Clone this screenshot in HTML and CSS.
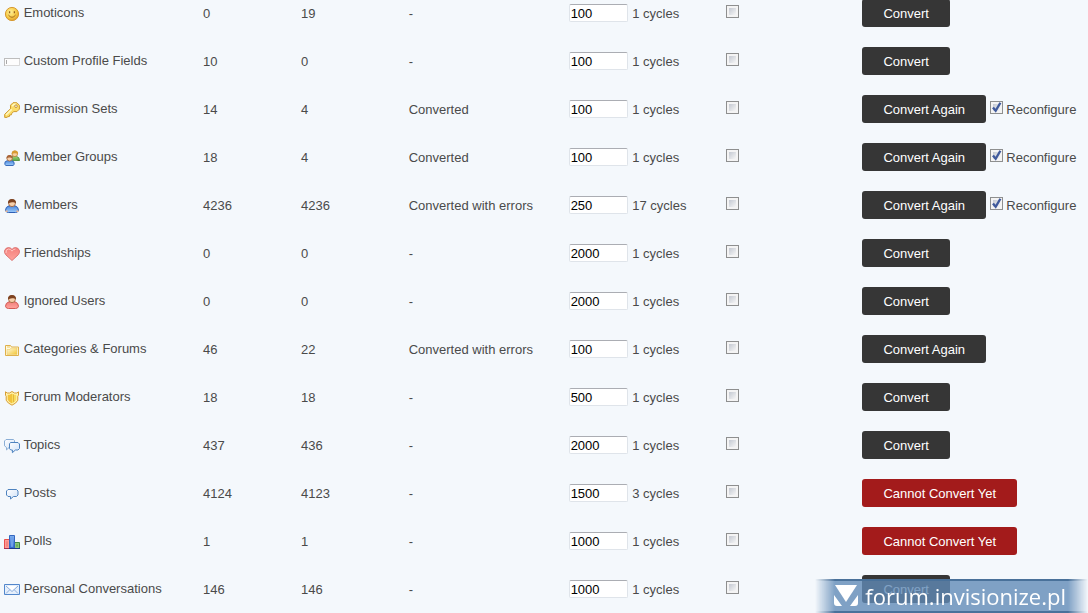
FILE: index.html
```html
<!DOCTYPE html>
<html lang="en">
<head>
<meta charset="utf-8">
<title>Converter</title>
<link rel="stylesheet" href="styles.css">
</head>
<body>
<svg class="defs" aria-hidden="true">
  <defs>
    <radialGradient id="gold" cx=".4" cy=".35" r=".7"><stop offset="0" stop-color="#fff19a"/><stop offset=".6" stop-color="#f6ca45"/><stop offset="1" stop-color="#dc9a2a"/></radialGradient>
    <linearGradient id="yellow" x2="1" y2="1"><stop offset="0" stop-color="#fffbe0"/><stop offset="1" stop-color="#f2c535"/></linearGradient>
    <linearGradient id="blue" x2="0" y2="1"><stop offset="0" stop-color="#4a86dc"/><stop offset="1" stop-color="#9ccbfb"/></linearGradient>
    <linearGradient id="red" x2="0" y2="1"><stop offset="0" stop-color="#f3807c"/><stop offset="1" stop-color="#ffa39c"/></linearGradient>
    <linearGradient id="green" x2="0" y2="1"><stop offset="0" stop-color="#9ed07a"/><stop offset="1" stop-color="#5cab45"/></linearGradient>
    <linearGradient id="pale" x2="1" y2="1"><stop offset="0" stop-color="#ffffff"/><stop offset="1" stop-color="#cfe1f7"/></linearGradient>
    <linearGradient id="barblue" x2="0" y2="1"><stop offset="0" stop-color="#7fb0f0"/><stop offset="1" stop-color="#2f68cf"/></linearGradient>
  </defs>
</svg>
<main class="page">
<table class="steps">
  <colgroup><col class="c-name"><col class="c-source"><col class="c-done"><col class="c-status"><col class="c-cycle"><col class="c-empty"><col class="c-action"></colgroup>
  <tbody>
  <tr>
    <th scope="row"><svg class="icon" viewBox="0 0 16 16"><circle cx="8" cy="8" r="6.6" fill="url(#gold)" stroke="#d79a32"/><path d="M5.6 5.2v2M10.4 5.2v2" stroke="#97601c" stroke-width="1.3"/><path d="M4.4 9q3.6 4.6 7.2 0" fill="none" stroke="#a66c1e"/></svg> <span class="name">Emoticons</span></th>
    <td class="text">0</td><td class="text">19</td><td class="text">-</td>
    <td><input class="amount" type="text" value="100" aria-label="Emoticons per cycle"> 1 cycles</td>
    <td><input class="tick" type="checkbox" aria-label="Empty emoticons"></td>
    <td><button class="btn" type="button">Convert</button></td>
  </tr>
  <tr>
    <th scope="row"><svg class="icon" viewBox="0 0 16 16"><path d="M.5 4.5h15v7H.5z" fill="#fdfdfd" stroke="#d9d9d9"/><path d="M0 4.5h16M.5 4v8" stroke="#bdbdbd"/><path d="M2.5 6v4" stroke="#aaa"/></svg> <span class="name">Custom Profile Fields</span></th>
    <td class="text">10</td><td class="text">0</td><td class="text">-</td>
    <td><input class="amount" type="text" value="100" aria-label="Custom profile fields per cycle"> 1 cycles</td>
    <td><input class="tick" type="checkbox" aria-label="Empty custom profile fields"></td>
    <td><button class="btn" type="button">Convert</button></td>
  </tr>
  <tr>
    <th scope="row"><svg class="icon" viewBox="0 0 16 16"><path d="M6.500 3.200 9 .7h3.800l2.600 2.600v3.800l-2.500 2.500H9.800L7.600 11.500l-.2 1.300-1.800.2-.2 1.500-1.600.2L3 15.400H.7v-3.100L6.500 6.800z" fill="#fbdc68" stroke="#ce9a2f"/><path d="M8.200 4.300 10 2.300h2.200M7.700 7.400 2 13" fill="none" stroke="#fff7bd" stroke-width="1.500"/><circle cx="12" cy="4.200" r="1.300" fill="#f4f8fc" stroke="#b98224" stroke-width=".8"/></svg> <span class="name">Permission Sets</span></th>
    <td class="text">14</td><td class="text">4</td><td class="text">Converted</td>
    <td><input class="amount" type="text" value="100" aria-label="Permission sets per cycle"> 1 cycles</td>
    <td><input class="tick" type="checkbox" aria-label="Empty permission sets"></td>
    <td><button class="btn" type="button">Convert Again</button> <label><input class="tick" type="checkbox" checked> Reconfigure</label></td>
  </tr>
  <tr>
    <th scope="row"><svg class="icon" viewBox="0 0 16 16"><path d="M6.500 10.500V8.300Q7 6.600 9.500 6.400h3Q15.500 7 15.500 10.500z" fill="url(#green)" stroke="#5b9a48"/><circle cx="10.800" cy="3.800" r="2.800" fill="#f7cfa0" stroke="#bd8330" stroke-width=".8"/><path d="M7.800 4Q7.600.3 11 .4T13.900 4q-3-1.600-6.100 0z" fill="#d79b31"/><path d="M.8 14.500Q.2 11 3.500 10.600h4.200q3 .6 2.500 3.900l-1.200 1H2z" fill="url(#blue)" stroke="#3b6dba"/><circle cx="5.600" cy="8.300" r="2.700" fill="#f6cfab" stroke="#a66a3c" stroke-width=".8"/><path d="M2.500 8.500Q2.300 4.800 5.600 4.900T8.700 8.500Q5.500 6.300 2.500 8.500z" fill="#a8653a"/></svg> <span class="name">Member Groups</span></th>
    <td class="text">18</td><td class="text">4</td><td class="text">Converted</td>
    <td><input class="amount" type="text" value="100" aria-label="Member groups per cycle"> 1 cycles</td>
    <td><input class="tick" type="checkbox" aria-label="Empty member groups"></td>
    <td><button class="btn" type="button">Convert Again</button> <label><input class="tick" type="checkbox" checked> Reconfigure</label></td>
  </tr>
  <tr>
    <th scope="row"><svg class="icon" viewBox="0 0 16 16"><path d="M1.500 12.300q0-3.500 3.500-4.500h6q3.500 1 3.500 4.500l-1 1.700-2 .5h-7l-2-.5z" fill="url(#blue)" stroke="#2d5fb5"/><path d="M1.600 13.300h2M12.400 13.300h2" stroke="#eeb48c" stroke-width="1.600"/><circle cx="8" cy="5.200" r="3.400" fill="#f6cfaa" stroke="#9a5b34" stroke-width=".8"/><path d="M4 5.600Q3.600.9 8 1t4 4.600Q10.600 3.800 8 4.300T4 5.600z" fill="#7d4220"/></svg> <span class="name">Members</span></th>
    <td class="text">4236</td><td class="text">4236</td><td class="text">Converted with errors</td>
    <td><input class="amount" type="text" value="250" aria-label="Members per cycle"> 17 cycles</td>
    <td><input class="tick" type="checkbox" aria-label="Empty members"></td>
    <td><button class="btn" type="button">Convert Again</button> <label><input class="tick" type="checkbox" checked> Reconfigure</label></td>
  </tr>
  <tr>
    <th scope="row"><svg class="icon" viewBox="0 0 16 16"><path d="M8 14.500 1.800 8.800Q.2 7 .6 4.600 1.500 1.700 4.600 1.600 6.800 1.700 8 3.500q1.200-1.800 3.400-1.900 3.100.1 4 3 .4 2.400-1.200 4.200z" fill="url(#red)" stroke="#dc7573"/><path d="M2 7Q1.500 3.200 4.600 3 7 3.200 8 5.200 9 3.200 11.400 3" fill="none" stroke="#ffc6c2"/></svg> <span class="name">Friendships</span></th>
    <td class="text">0</td><td class="text">0</td><td class="text">-</td>
    <td><input class="amount" type="text" value="2000" aria-label="Friendships per cycle"> 1 cycles</td>
    <td><input class="tick" type="checkbox" aria-label="Empty friendships"></td>
    <td><button class="btn" type="button">Convert</button></td>
  </tr>
  <tr>
    <th scope="row"><svg class="icon" viewBox="0 0 16 16"><path d="M1.500 12.300q0-3.500 3.500-4.500h6q3.500 1 3.500 4.500l-1 1.700-2 .5h-7l-2-.5z" fill="url(#red)" stroke="#d25b55"/><circle cx="8" cy="5.200" r="3.400" fill="#f6cfaa" stroke="#9a5b34" stroke-width=".8"/><path d="M4 5.600Q3.600.9 8 1t4 4.600Q10.600 3.800 8 4.300T4 5.600z" fill="#7d4220"/></svg> <span class="name">Ignored Users</span></th>
    <td class="text">0</td><td class="text">0</td><td class="text">-</td>
    <td><input class="amount" type="text" value="2000" aria-label="Ignored users per cycle"> 1 cycles</td>
    <td><input class="tick" type="checkbox" aria-label="Empty ignored users"></td>
    <td><button class="btn" type="button">Convert</button></td>
  </tr>
  <tr>
    <th scope="row"><svg class="icon" viewBox="0 0 16 16"><path d="M1.500 13.500v-10h5l1 1.500h7v8.500z" fill="#fffadf" stroke="#deb04b"/><path d="M3 12.500v-5h3l1-1.500h6v6.500z" fill="url(#yellow)" stroke="#edcb69" stroke-width=".6"/><path d="M3 5h3" stroke="#ebc76a"/></svg> <span class="name">Categories &amp; Forums</span></th>
    <td class="text">46</td><td class="text">22</td><td class="text">Converted with errors</td>
    <td><input class="amount" type="text" value="100" aria-label="Categories and forums per cycle"> 1 cycles</td>
    <td><input class="tick" type="checkbox" aria-label="Empty categories and forums"></td>
    <td><button class="btn" type="button">Convert Again</button></td>
  </tr>
  <tr>
    <th scope="row"><svg class="icon" viewBox="0 0 16 16"><path d="M8 1.500 5.500 3H3.200L1.500 1.800v3.400l.7 1v4Q3.500 13.200 8 15.200q4.500-2 5.800-5v-4l.7-1V1.800L12.800 3h-2.300z" fill="#fff3b3" stroke="#d79d32"/><path d="M8 3.500 5.500 4.800H3.700v5Q5 12.200 8 13.600z" fill="#f2c23c"/><path d="M8 3.500 10.500 4.800h1.800v5Q11 12.200 8 13.600z" fill="#f8dc5c"/><path d="M9.500 4.500v7.600" stroke="#e5b53e"/></svg> <span class="name">Forum Moderators</span></th>
    <td class="text">18</td><td class="text">18</td><td class="text">-</td>
    <td><input class="amount" type="text" value="500" aria-label="Forum moderators per cycle"> 1 cycles</td>
    <td><input class="tick" type="checkbox" aria-label="Empty forum moderators"></td>
    <td><button class="btn" type="button">Convert</button></td>
  </tr>
  <tr>
    <th scope="row"><svg class="icon" viewBox="0 0 16 16"><path d="M2 1.500h7.500l1 1v6l-1 1H5l-2.500 2.400V9.500L.5 7.800V3z" fill="url(#pale)" stroke="#8aaed6"/><path d="M6.500 4.500H14l1.500 1.500v4.500L14 12h-2.600l-3 2.700V12H6.800L5.500 10.700V5.800z" fill="url(#pale)" stroke="#4e83bf"/></svg> <span class="name">Topics</span></th>
    <td class="text">437</td><td class="text">436</td><td class="text">-</td>
    <td><input class="amount" type="text" value="2000" aria-label="Topics per cycle"> 1 cycles</td>
    <td><input class="tick" type="checkbox" aria-label="Empty topics"></td>
    <td><button class="btn" type="button">Convert</button></td>
  </tr>
  <tr>
    <th scope="row"><svg class="icon" viewBox="0 0 16 16"><path d="M4 3.500h8.500L14 5v4l-1.500 1.500h-3L6.500 13v-2.500H4L2.500 9V5z" fill="url(#pale)" stroke="#4e83bf"/></svg> <span class="name">Posts</span></th>
    <td class="text">4124</td><td class="text">4123</td><td class="text">-</td>
    <td><input class="amount" type="text" value="1500" aria-label="Posts per cycle"> 3 cycles</td>
    <td><input class="tick" type="checkbox" aria-label="Empty posts"></td>
    <td><button class="btn btn-blocked" type="button">Cannot Convert Yet</button></td>
  </tr>
  <tr>
    <th scope="row"><svg class="icon" viewBox="0 0 16 16"><path d="M.5 5.500h5v9h-5z" fill="#ff9b96" stroke="#e8504d"/><path d="M2.500 7.500h1v5h-1z" fill="#ffc5bf" stroke="#f58580"/><path d="M10.500 8.500h5v6h-5z" fill="#8cc67a" stroke="#3f8a45"/><path d="M12.500 10.500h1v2h-1z" fill="#b9e3a5" stroke="#69ad5c"/><path d="M5.500 1.500h5v13h-5z" fill="url(#barblue)" stroke="#3467c0"/><path d="M7.500 3.500h1v9h-1z" fill="#76a8ee" stroke="#6fa0e8"/><path d="M0 14.500h5" stroke="#a52e54"/><path d="M5 14.500h11" stroke="#1d3b86"/></svg> <span class="name">Polls</span></th>
    <td class="text">1</td><td class="text">1</td><td class="text">-</td>
    <td><input class="amount" type="text" value="1000" aria-label="Polls per cycle"> 1 cycles</td>
    <td><input class="tick" type="checkbox" aria-label="Empty polls"></td>
    <td><button class="btn btn-blocked" type="button">Cannot Convert Yet</button></td>
  </tr>
  <tr>
    <th scope="row"><svg class="icon" viewBox="0 0 16 16"><path d="M.5 2.500h15v10H.5z" fill="#e5effb" stroke="#5287cc"/><path d="m2 4 6 5.500L14 4M2 11.500l4-4M14 11.500l-4-4" fill="none" stroke="#8caedd"/><path d="M3 4h10L8 8.500z" fill="#fff"/></svg> <span class="name">Personal Conversations</span></th>
    <td class="text">146</td><td class="text">146</td><td class="text">-</td>
    <td><input class="amount" type="text" value="1000" aria-label="Personal conversations per cycle"> 1 cycles</td>
    <td><input class="tick" type="checkbox" aria-label="Empty personal conversations"></td>
    <td><button class="btn" type="button">Convert</button></td>
  </tr>
  </tbody>
</table>
<div class="stamp">
  <svg class="stamp-logo" viewBox="0 0 24 22"><path d="M1 0h22L12 17z" fill="#fff"/><path d="M0 10l8 11H3q-3 0-3-3zM24 10l-8 11h5q3 0 3-3z" fill="#fff"/></svg>
  <span>forum.invisionize.pl</span>
</div>
</main>
</body>
</html>
```

FILE: styles.css
```css
body {
  margin: 0;
  background: #f4f8fc;
  color: #4a4a4a;
  font: 13px/16px "Liberation Sans", Arial, sans-serif;
}

.defs {
  position: absolute;
  width: 0;
  height: 0;
}

.page {
  position: relative;
  overflow: hidden;
}

.steps {
  width: 100%;
  margin-top: -11px;
  border-collapse: collapse;
  table-layout: fixed;
}

.c-name { width: 18.3%; }
.c-source { width: 9%; }
.c-done { width: 9.9%; }
.c-status { width: 14.7%; }
.c-cycle { width: 14.5%; }
.c-empty { width: 12.5%; }

.steps th,
.steps td {
  box-sizing: border-box;
  height: 48px;
  padding: 0 4px;
  text-align: left;
  font-weight: normal;
  vertical-align: middle;
  white-space: nowrap;
}

.steps .text {
  padding-top: 2px;
}

.icon {
  display: inline-block;
  width: 16px;
  height: 16px;
  vertical-align: -5px;
}

.amount {
  box-sizing: border-box;
  width: 59px;
  height: 18px;
  margin: 0 1px 0 0;
  padding: 0 1px;
  border: 1px solid #dfe4ea;
  border-top-color: #abadb3;
  border-radius: 2px;
  background: #fff;
  color: #000;
  font: inherit;
}

.tick {
  appearance: none;
  box-sizing: border-box;
  width: 13px;
  height: 13px;
  margin: 0;
  border: 1px solid #8e8f8f;
  background: linear-gradient(135deg, #c4c9d2, #f6f6f6) content-box, #f4f4f4;
  padding: 2px;
  vertical-align: -1px;
}

.tick:checked {
  background: url("data:image/svg+xml,%3Csvg xmlns='http://www.w3.org/2000/svg' viewBox='0 0 11 11'%3E%3Cpath d='M2.500 5.500 4.800 8.300 8.800 1.500' fill='none' stroke='%23405a9c' stroke-width='2'/%3E%3C/svg%3E") border-box, linear-gradient(135deg, #c4c9d2, #f6f6f6) content-box, #f4f4f4;
  vertical-align: baseline;
}

.btn {
  height: 28px;
  margin: 0;
  padding: 2px 21px 0;
  border: 0;
  border-radius: 3px;
  background: #363636;
  color: #fff;
  font: inherit;
}

.btn-blocked {
  background: #a31b1b;
}

.stamp {
  position: absolute;
  right: 0;
  bottom: 0;
  display: flex;
  align-items: center;
  box-sizing: border-box;
  height: 34px;
  padding: 0 22px 0 19px;
  gap: 7px;
  border: solid #49719a;
  border-width: 2px 0;
  background: rgba(97, 139, 182, 0.8);
  color: #fff;
  font: 500 22px/30px "Open Sans", "Noto Sans", sans-serif;
  -webkit-mask-image: linear-gradient(90deg, transparent, #000 20px, #000 calc(100% - 20px), transparent);
  mask-image: linear-gradient(90deg, transparent, #000 20px, #000 calc(100% - 20px), transparent);
}

.stamp-logo {
  width: 24px;
  height: 22px;
}
```
